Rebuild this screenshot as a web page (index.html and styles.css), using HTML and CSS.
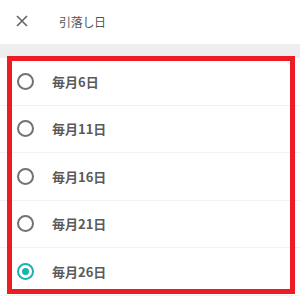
FILE: index.html
```html
<!DOCTYPE html>
<html lang="ja">
<head>
<meta charset="utf-8">
<link rel="stylesheet" href="styles.css">
</head>
<body>
<div class="page">
  <header class="header">
    <svg class="close" width="12" height="12" viewBox="0 0 12 12"><path d="M1 1L11 11M11 1L1 11" stroke="#666" stroke-width="1.6" fill="none"/></svg>
    <span class="title">引落し日</span>
  </header>
  <div class="band"></div>
  <ul class="list">
    <li class="row"><span class="radio"></span><span class="label">毎月6日</span></li>
    <li class="row"><span class="radio"></span><span class="label">毎月11日</span></li>
    <li class="row"><span class="radio"></span><span class="label">毎月16日</span></li>
    <li class="row"><span class="radio"></span><span class="label">毎月21日</span></li>
    <li class="row"><span class="radio checked"></span><span class="label">毎月26日</span></li>
  </ul>
  <div class="highlight"></div>
</div>
</body>
</html>
```
FILE: styles.css
```css
* { box-sizing: border-box; }
html, body { margin: 0; padding: 0; background: #fff; }
body { font-family: "Noto Sans CJK JP", "Noto Sans", sans-serif; }
.page { position: relative; width: 300px; height: 297px; overflow: hidden; }
.header { height: 44px; display: flex; align-items: center; padding-left: 16px; }
.close { display: block; margin-top: -2px; }
.title { margin-left: 31px; font-size: 12px; color: #555; margin-top: -2px; letter-spacing: -0.3px; }
.band { height: 14px; background: #eeeeee; }
.list { list-style: none; margin: 0; padding: 0; }
.row { height: 47.5px; border-bottom: 1px solid #f2f2f2; display: flex; align-items: center; padding-left: 17px; }
.radio { width: 17px; height: 17px; border: 2px solid #727272; border-radius: 50%; display: flex; align-items: center; justify-content: center; }
.radio.checked { border-color: #17b3b3; }
.radio.checked::after { content: ""; width: 7px; height: 7px; border-radius: 50%; background: #17b3b3; }
.label { margin-left: 18px; font-size: 13px; font-weight: bold; color: #5a5a5a; }
.highlight { position: absolute; left: 7px; top: 56px; width: 288px; height: 238px; border: 5px solid #ed1c24; }
```
